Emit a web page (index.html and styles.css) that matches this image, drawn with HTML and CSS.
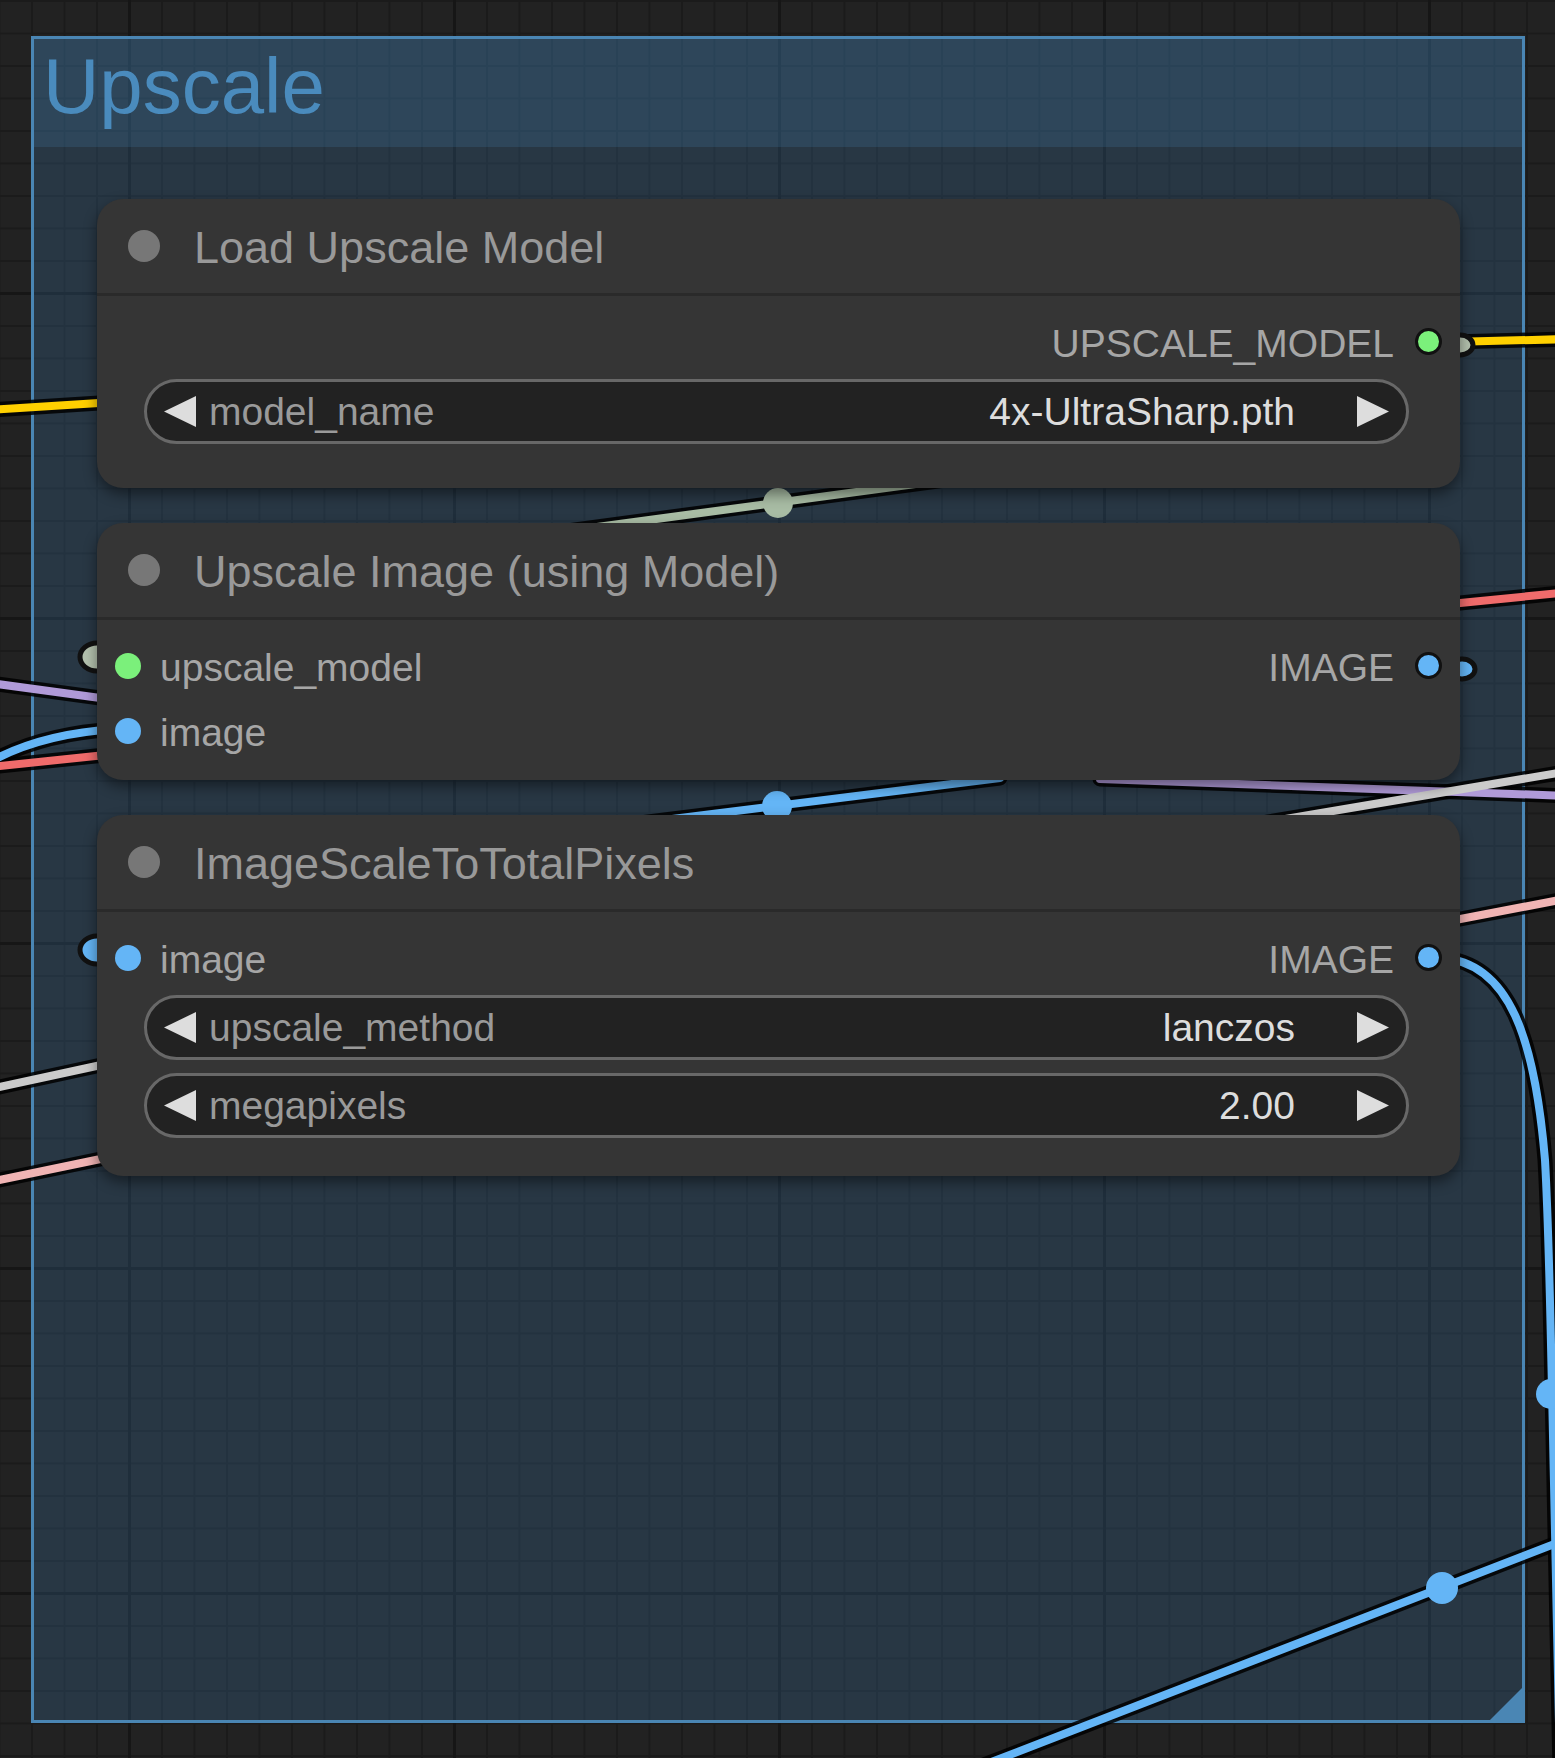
FILE: index.html
```html
<!DOCTYPE html>
<html>
<head>
<meta charset="utf-8">
<link rel="stylesheet" href="styles.css">
</head>
<body>
<div class="canvas">
  <div class="group">
    <div class="group-header">Upscale</div>
    <div class="group-body"></div>
    <svg class="group-resize" width="32" height="32" viewBox="0 0 32 32"><polygon points="0,32 32,32 32,0"/></svg>
  </div>

  <svg class="links" width="1555" height="1758" viewBox="0 0 1555 1758">
    <g class="outline">
      <path d="M -10 410 L 115 402"/>
      <path d="M 1450 342 L 1570 339"/>
      <path d="M 560 532 L 960 478"/>
      <path d="M -10 683 L 115 700"/>
      <path d="M -10 762 Q 40 734 115 729"/>
      <path d="M -10 767 L 115 754"/>
      <path d="M -10 1089 L 115 1062"/>
      <path d="M -10 1182 L 115 1156"/>
      <path d="M 1450 604 L 1570 592"/>
      <path d="M 1450 921 L 1570 898"/>
      <path d="M 600 828 L 1000 778"/>
      <path d="M 1100 779 L 1570 796"/>
      <path d="M 1250 825 L 1570 771"/>
      <path d="M 1441 958 C 1510 962 1535 1040 1545 1160 C 1550 1250 1552 1400 1560 1770"/>
      <path d="M 950 1778 L 1570 1538"/>
    </g>
    <path class="wire yellow" d="M -10 410 L 115 402"/>
    <path class="wire yellow" d="M 1450 342 L 1570 339"/>
    <path class="wire sage" d="M 560 532 L 960 478"/>
    <path class="wire purple" d="M -10 683 L 115 700"/>
    <path class="wire blue" d="M -10 762 Q 40 734 115 729"/>
    <path class="wire red" d="M -10 767 L 115 754"/>
    <path class="wire gray" d="M -10 1089 L 115 1062"/>
    <path class="wire pink" d="M -10 1182 L 115 1156"/>
    <path class="wire red" d="M 1450 604 L 1570 592"/>
    <path class="wire pink" d="M 1450 921 L 1570 898"/>
    <path class="wire blue" d="M 600 828 L 1000 778"/>
    <path class="wire purple" d="M 1100 779 L 1570 796"/>
    <path class="wire gray" d="M 1250 825 L 1570 771"/>
    <path class="wire blue" d="M 1441 958 C 1510 962 1535 1040 1545 1160 C 1550 1250 1552 1400 1560 1770"/>
    <path class="wire blue" d="M 950 1778 L 1570 1538"/>

    <circle class="dot-sage" cx="778" cy="503" r="15"/>
    <circle class="dot-blue" cx="777" cy="806" r="15"/>
    <circle class="dot-blue" cx="1551" cy="1394" r="15"/>
    <circle class="dot-blue" cx="1442" cy="1588" r="16"/>

    <ellipse class="bump sage-fill" cx="97" cy="657" rx="17" ry="14"/>
    <ellipse class="bump blue-fill" cx="97" cy="950" rx="17" ry="14"/>
    <ellipse class="bump sage-fill" cx="1460" cy="345" rx="13" ry="10"/>
    <ellipse class="bump blue-fill" cx="1462" cy="669" rx="13" ry="10"/>
  </svg>

  <div class="node node-load">
    <div class="node-title"><span class="title-dot"></span><span class="title-text">Load Upscale Model</span></div>
    <div class="node-body pad-load">
      <div class="slot-row">
        <span class="spacer"></span>
        <span class="slot-label out-label">UPSCALE_MODEL</span>
        <span class="slot-dot out green"></span>
      </div>
      <div class="widget first-widget">
        <svg class="arrow" width="32" height="31" viewBox="0 0 32 31"><polygon points="32,0 32,31 0,15.5"/></svg>
        <span class="w-label">model_name</span>
        <span class="spacer"></span>
        <span class="w-value">4x-UltraSharp.pth</span>
        <svg class="arrow right" width="32" height="31" viewBox="0 0 32 31"><polygon points="0,0 0,31 32,15.5"/></svg>
      </div>
    </div>
  </div>

  <div class="node node-upscale">
    <div class="node-title"><span class="title-dot"></span><span class="title-text">Upscale Image (using Model)</span></div>
    <div class="node-body pad-upscale">
      <div class="slot-row">
        <span class="slot-dot in green"></span>
        <span class="slot-label in-label">upscale_model</span>
        <span class="spacer"></span>
        <span class="slot-label out-label">IMAGE</span>
        <span class="slot-dot out blue-dot"></span>
      </div>
      <div class="slot-row">
        <span class="slot-dot in blue-dot"></span>
        <span class="slot-label in-label">image</span>
      </div>
    </div>
  </div>

  <div class="node node-scale">
    <div class="node-title"><span class="title-dot"></span><span class="title-text">ImageScaleToTotalPixels</span></div>
    <div class="node-body pad-scale">
      <div class="slot-row">
        <span class="slot-dot in blue-dot"></span>
        <span class="slot-label in-label">image</span>
        <span class="spacer"></span>
        <span class="slot-label out-label">IMAGE</span>
        <span class="slot-dot out blue-dot"></span>
      </div>
      <div class="widget first-widget">
        <svg class="arrow" width="32" height="31" viewBox="0 0 32 31"><polygon points="32,0 32,31 0,15.5"/></svg>
        <span class="w-label">upscale_method</span>
        <span class="spacer"></span>
        <span class="w-value">lanczos</span>
        <svg class="arrow right" width="32" height="31" viewBox="0 0 32 31"><polygon points="0,0 0,31 32,15.5"/></svg>
      </div>
      <div class="widget next-widget">
        <svg class="arrow" width="32" height="31" viewBox="0 0 32 31"><polygon points="32,0 32,31 0,15.5"/></svg>
        <span class="w-label">megapixels</span>
        <span class="spacer"></span>
        <span class="w-value">2.00</span>
        <svg class="arrow right" width="32" height="31" viewBox="0 0 32 31"><polygon points="0,0 0,31 32,15.5"/></svg>
      </div>
    </div>
  </div>
</div>
</body>
</html>
```

FILE: styles.css
```css
html, body {
  margin: 0;
  padding: 0;
  background: #222;
}

.canvas {
  position: relative;
  width: 1555px;
  height: 1758px;
  overflow: hidden;
  font-family: "Liberation Sans", Arial, sans-serif;
  background-color: #222;
  background-image:
    linear-gradient(to right, #161616 0 3px, transparent 3px),
    linear-gradient(to bottom, #161616 0 3px, transparent 3px),
    linear-gradient(to right, #1b1b1b 0 2px, transparent 2px),
    linear-gradient(to bottom, #1b1b1b 0 2px, transparent 2px);
  background-size: 325px 100%, 100% 325px, 32.5px 100%, 100% 32.5px;
  background-position: 128px 0, 0 292px, 31px 0, 0 0;
}

/* group frame */
.group {
  position: absolute;
  left: 31px;
  top: 36px;
  width: 1494px;
  height: 1687px;
  box-sizing: border-box;
  border: 3px solid #4a86b4;
  background: rgba(58, 118, 170, 0.25);
  display: flex;
  flex-direction: column;
  z-index: 1;
}

.group-header {
  height: 108px;
  box-sizing: border-box;
  padding: 8px 0 0 9px;
  font-size: 78px;
  line-height: 78px;
  color: #4a8bbd;
  background: rgba(80, 160, 220, 0.15);
}

.group-body {
  flex: 1;
}

.group-resize {
  position: absolute;
  right: 0;
  bottom: 0;
  fill: #4a86b4;
}

/* links */
.links {
  position: absolute;
  left: 0;
  top: 0;
  z-index: 2;
}

.outline path {
  fill: none;
  stroke: #000;
  stroke-opacity: 0.85;
  stroke-width: 15;
  stroke-linecap: round;
}

.wire {
  fill: none;
  stroke-width: 8;
  stroke-linecap: round;
}

.yellow { stroke: #ffd000; }
.sage { stroke: #a8bca4; }
.purple { stroke: #b09ad8; }
.blue { stroke: #64b5f6; }
.red { stroke: #ef6b6b; }
.gray { stroke: #cbcbcb; }
.pink { stroke: #f0b4b4; }

.dot-sage { fill: #a8bca4; }
.dot-blue { fill: #64b5f6; }

.bump {
  stroke: #111;
  stroke-width: 5;
}
.sage-fill { fill: #b4c2ae; }
.blue-fill { fill: #64b5f6; }

/* nodes */
.node {
  position: absolute;
  left: 97px;
  width: 1363px;
  background: #353535;
  border-radius: 26px;
  box-shadow: 0 6px 14px rgba(0, 0, 0, 0.45);
  display: flex;
  flex-direction: column;
  z-index: 3;
}

.node-load { top: 199px; height: 289px; }
.node-upscale { top: 523px; height: 257px; }
.node-scale { top: 815px; height: 361px; }

.node-title {
  height: 97px;
  box-sizing: border-box;
  border-bottom: 3px solid #2a2a2a;
  display: flex;
  align-items: center;
  padding-left: 31px;
}

.title-dot {
  width: 32px;
  height: 32px;
  border-radius: 50%;
  background: #777;
  flex: none;
}

.title-text {
  margin-left: 34px;
  padding-top: 4px;
  font-size: 45px;
  color: #999;
  white-space: nowrap;
}

.node-body {
  display: flex;
  flex-direction: column;
  padding-top: 13px;
}

.slot-row {
  height: 65px;
  display: flex;
  align-items: center;
  padding: 0 18px;
}

.spacer { flex: 1; }

.slot-dot {
  flex: none;
  border-radius: 50%;
}

.slot-dot.in {
  width: 26px;
  height: 26px;
}

.slot-dot.out {
  width: 21px;
  height: 21px;
  border: 3px solid #111;
}

.green { background: #7bf07b; }
.blue-dot { background: #64b5f6; }

.slot-label {
  padding-top: 4px;
  font-size: 39px;
  color: #a6a6a6;
  white-space: nowrap;
}

.in-label { margin-left: 19px; }
.out-label { margin-right: 21px; }

.widget {
  height: 65px;
  box-sizing: border-box;
  margin: 0 51px 0 47px;
  border: 3px solid #686868;
  border-radius: 33px;
  background: #222;
  display: flex;
  align-items: center;
  padding: 0 17px;
}

.first-widget { margin-top: 5px; }
.next-widget { margin-top: 13px; }

.arrow {
  flex: none;
  fill: #ddd;
}

.w-label {
  margin-left: 13px;
  font-size: 39px;
  color: #9a9a9a;
  white-space: nowrap;
}

.w-value {
  margin-right: 62px;
  font-size: 39px;
  color: #dddddd;
  white-space: nowrap;
}
```
